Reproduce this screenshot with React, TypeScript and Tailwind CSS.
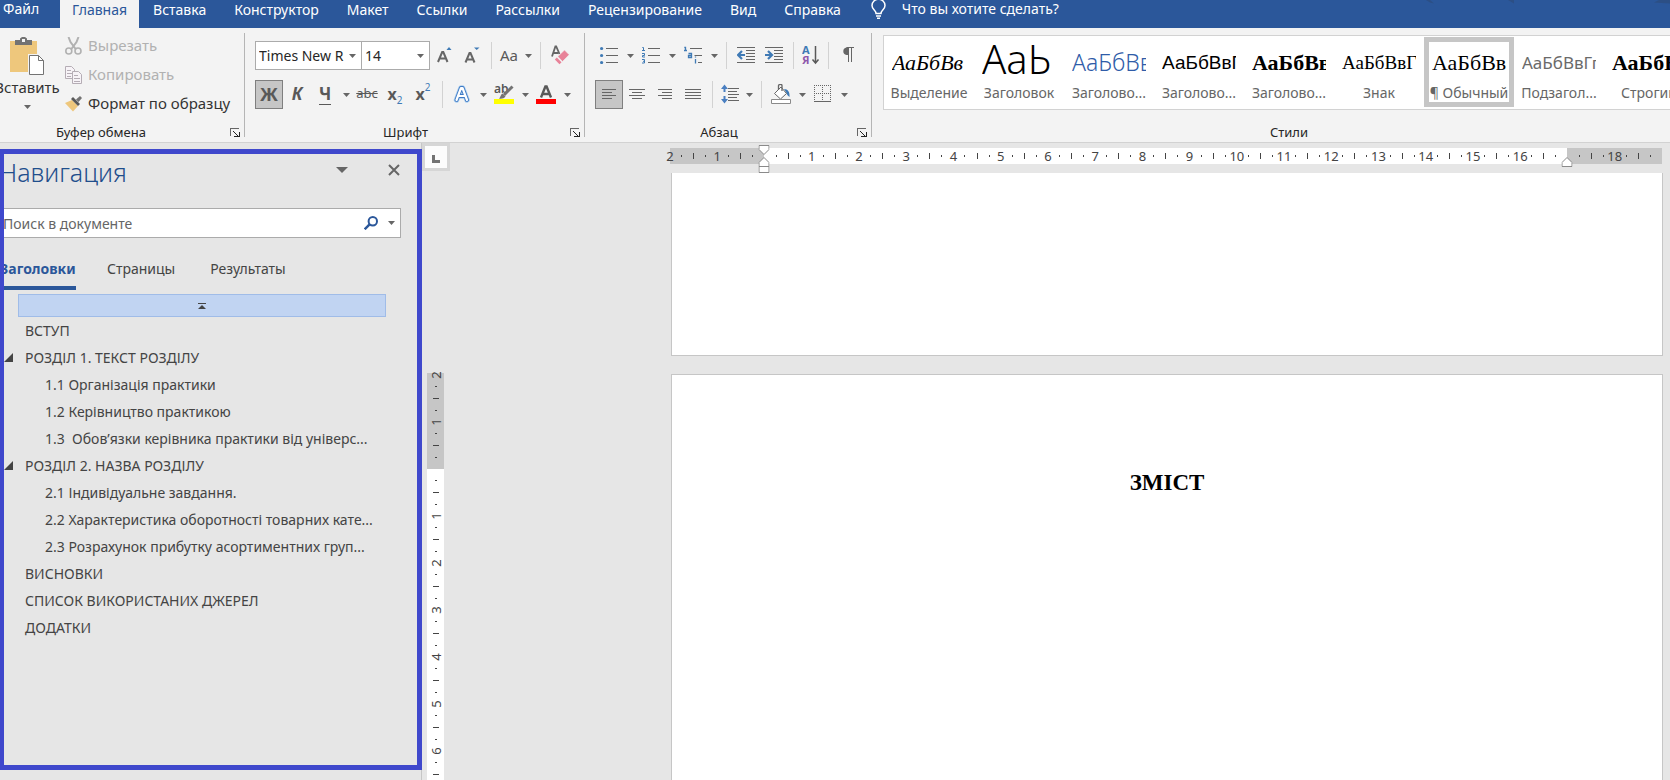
import type { ReactNode } from 'react';
import clsx from 'clsx';

const TABS = ['Вставка', 'Конструктор', 'Макет', 'Ссылки', 'Рассылки', 'Рецензирование', 'Вид', 'Справка'];

interface StylePreview {
  sample: string;
  label: string;
  cls: string;
  selected?: boolean;
}

const STYLES: StylePreview[] = [
  { sample: 'АаБбВв', label: 'Выделение', cls: 'font-["Liberation_Serif",serif] italic text-[22px] text-black' },
  { sample: 'АаЬ', label: 'Заголовок', cls: 'font-light text-[40px] text-black pb-2' },
  { sample: 'АаБбВв', label: 'Заголово...', cls: 'font-light text-[23px] text-[#2f5ca8]' },
  { sample: 'АаБбВвГ', label: 'Заголово...', cls: 'font-["Liberation_Sans",sans-serif] text-[19px] text-black' },
  { sample: 'АаБбВв', label: 'Заголово...', cls: 'font-["Liberation_Serif",serif] font-bold text-[22px] text-black' },
  { sample: 'АаБбВвГ', label: 'Знак', cls: 'font-["Liberation_Serif",serif] text-[19px] text-black' },
  { sample: 'АаБбВв', label: '¶ Обычный', cls: 'font-["Liberation_Serif",serif] text-[22px] text-black', selected: true },
  { sample: 'АаБбВвГг', label: 'Подзагол...', cls: 'text-[17px] text-[#6a6a6a]' },
  { sample: 'АаБбВв', label: 'Строгий', cls: 'font-["Liberation_Serif",serif] font-bold text-[22px] text-black' },
];

interface Heading {
  text: string;
  level: 1 | 2;
  open?: boolean;
}

const HEADINGS: Heading[] = [
  { text: 'ВСТУП', level: 1 },
  { text: 'РОЗДІЛ 1. ТЕКСТ РОЗДІЛУ', level: 1, open: true },
  { text: '1.1 Організація практики', level: 2 },
  { text: '1.2 Керівництво практикою', level: 2 },
  { text: '1.3  Обов’язки керівника практики від універс...', level: 2 },
  { text: 'РОЗДІЛ 2. НАЗВА РОЗДІЛУ', level: 1, open: true },
  { text: '2.1 Індивідуальне завдання.', level: 2 },
  { text: '2.2 Характеристика оборотності товарних кате...', level: 2 },
  { text: '2.3 Розрахунок прибутку асортиментних груп...', level: 2 },
  { text: 'ВИСНОВКИ', level: 1 },
  { text: 'СПИСОК ВИКОРИСТАНИХ ДЖЕРЕЛ', level: 1 },
  { text: 'ДОДАТКИ', level: 1 },
];

/* ---------- small parts ---------- */

function Caret() {
  return (
    <svg width="7" height="4" viewBox="0 0 7 4" fill="#666" className="shrink-0">
      <path d="M0 0h7L3.500 4z" />
    </svg>
  );
}

function Sep() {
  return <div className="mx-[5px] h-[27px] w-px shrink-0 bg-[#d2d2d2]" />;
}

interface ToolProps {
  label: string;
  children: ReactNode;
  menu?: boolean;
  narrow?: boolean;
  active?: boolean;
}

function Tool({ label, children, menu, narrow, active }: ToolProps) {
  return (
    <button type="button" aria-label={label} aria-pressed={active} className="flex h-[29px] shrink-0 items-center text-[#595959]">
      <span
        className={clsx(
          'flex h-full items-center justify-center pb-px',
          narrow ? 'w-6' : 'w-7',
          active && 'border border-[#7f7f7f] bg-[#c6c6c6]',
        )}
      >
        {children}
      </span>
      {menu && <span className="flex w-[14px] justify-center"><Caret /></span>}
    </button>
  );
}

function GroupFooter({ title }: { title: string }) {
  return (
    <div className="mt-auto flex h-[9px] items-center pr-1">
      <span className="flex-1 pr-1 text-center text-[13px] leading-none text-[#262626]">{title}</span>
      <button type="button" aria-label={`${title}: параметры`}>
        <svg width="10" height="9" viewBox="0 0 10 9" fill="none" stroke="#666" shapeRendering="crispEdges">
          <path d="M.5 8V.5H9" />
          <path d="M3 3l5 5" stroke="#222" />
          <path d="M9 4v5M4 8.500h5" stroke="#222" />
        </svg>
      </button>
    </div>
  );
}

function Lines({ rows }: { rows: [number, number][] }) {
  return (
    <svg width="18" height="14" viewBox="0 0 18 14" stroke="#666" shapeRendering="crispEdges">
      {rows.map(([from, to], i) => (
        <path key={i} d={`M${from} ${i * 3 + 2.5}H${to}`} />
      ))}
    </svg>
  );
}

/* ---------- ribbon groups ---------- */

function ClipboardGroup() {
  return (
    <section className="-ml-6 flex w-[269px] shrink-0 flex-col border-r border-[#b5b5b5] text-[15px]">
      <div className="flex pl-4">
        <button type="button" className="flex w-[70px] shrink-0 flex-col items-center pt-1 text-[#333]">
          <svg width="34" height="38" viewBox="0 0 34 38">
            <path d="M0 4h27v31H0z" fill="#eec77c" />
            <path d="M5 8V3h5V1.500L12 0h3l2 1.500V3h5v5z" fill="#737373" />
            <path d="M12 2h3v3h-3z" fill="#f3f3f3" />
            <path d="M18 17h17v21H18z" fill="#f3f3f3" />
            <path d="M19.500 18.500h9l5 5v14h-14z" fill="#fff" stroke="#737373" />
            <path d="M28.500 18.500v5h5" fill="none" stroke="#737373" />
          </svg>
          <span className="leading-6">Вставить</span>
          <span className="pt-[6px]"><Caret /></span>
        </button>
        <div className="flex flex-col gap-1 pl-[3px]">
          <button type="button" disabled className="flex h-[25px] items-center gap-[6px] text-[#b1b1b1]">
            <svg width="17" height="18" viewBox="0 0 17 18" fill="none" stroke="#b1b1b1" strokeWidth="1.600">
              <path d="M3.500 0l2 5 5.500 7.500M13.500 0l-2 5L6 12.500" strokeWidth="2" />
              <circle cx="3.800" cy="14" r="3" />
              <circle cx="13" cy="14" r="3" />
            </svg>
            Вырезать
          </button>
          <button type="button" disabled className="flex h-[25px] items-center gap-[6px] text-[#b1b1b1]">
            <svg width="17" height="18" viewBox="0 0 17 18" fill="#f7f3f7" stroke="#b5adb5">
              <path d="M.5.5h6l3 3v9h-9z" />
              <path d="M2 4.500h4M2 7.500h5M2 10.500h4" />
              <path d="M7.500 5.500h6l3 3v9h-9z" />
              <path d="M9 9.500h4M9 12.500h6M9 15.500h6" />
            </svg>
            Копировать
          </button>
          <button type="button" className="flex h-[25px] items-center gap-[6px] text-[#333]">
            <svg width="17" height="16" viewBox="0 0 17 16">
              <path d="M0 7l7-3 6 6-5 5.500z" fill="#eec77c" />
              <path d="M6 3l2-2 7 7-2 2z" fill="#595959" />
              <path d="M11 3.500L15 0l2 2-3.500 4z" fill="#737373" />
            </svg>
            Формат по образцу
          </button>
        </div>
      </div>
      <GroupFooter title="Буфер обмена" />
    </section>
  );
}

function FontGroup() {
  return (
    <section className="flex w-[340px] shrink-0 flex-col border-r border-[#b5b5b5]">
      <div className="flex flex-col gap-[10px] px-[10px] pt-2">
        <div className="flex items-center">
          <div className="flex h-[29px] w-[107px] items-center justify-between border border-[#ababab] bg-white pr-[5px] pl-[3px]">
            <input aria-label="Шрифт" defaultValue="Times New R" className="w-[90px] min-w-0 bg-transparent text-[14px] text-[#262626] outline-none" />
            <Caret />
          </div>
          <div className="-ml-px flex h-[29px] w-[71px] items-center justify-between border border-[#ababab] bg-white pr-[5px] pl-[3px]">
            <input aria-label="Размер шрифта" defaultValue="14" className="w-10 min-w-0 bg-transparent text-[14px] text-[#262626] outline-none" />
            <Caret />
          </div>
          <Tool label="Увеличить размер">
            <svg width="16" height="18" viewBox="0 0 16 18">
              <path d="M2 16L6.200 6h1.100l4.200 10M4 12.500h5.500" fill="none" stroke="#666" strokeWidth="2" />
              <path d="M10.500 4L13 1l2.500 3z" fill="#3f7ab5" />
            </svg>
          </Tool>
          <Tool label="Уменьшить размер">
            <svg width="16" height="18" viewBox="0 0 16 18">
              <path d="M1.500 16.500L5.500 7h1l4 9.500M3 13.500h6" fill="none" stroke="#666" strokeWidth="2" />
              <path d="M10 1.500h5.500L12.700 4z" fill="#3f7ab5" />
            </svg>
          </Tool>
          <Sep />
          <Tool label="Регистр" narrow menu><span className="text-[15px]">Aa</span></Tool>
          <Sep />
          <Tool label="Очистить форматирование">
            <svg width="20" height="20" viewBox="0 0 20 20">
              <path d="M2 11.500L5.400 1.500h.8L9.500 9M3.200 8h5" fill="none" stroke="#666" strokeWidth="1.800" />
              <path d="M7.800 11.500L14.500 5l4.700 4.700-6.700 6.800z" fill="#e88298" stroke="#f3f3f3" strokeWidth=".6" />
              <path d="M6.800 12.500l4.700 4.700-2 2-4.700-4.700z" fill="#e88298" />
            </svg>
          </Tool>
        </div>
        <div className="flex items-center">
          <Tool label="Полужирный" active><b className="text-[18px]">Ж</b></Tool>
          <Tool label="Курсив"><b className="text-[17px] italic">К</b></Tool>
          <Tool label="Подчеркнутый" menu><b className="border-b border-[#595959] text-[17px] leading-5">Ч</b></Tool>
          <Tool label="Зачеркнутый"><span className="text-[13px] line-through">abc</span></Tool>
          <Tool label="Подстрочный знак">
            <b className="text-[16px]">x</b><span className="self-end text-[10px] text-[#3f7ab5]">2</span>
          </Tool>
          <Tool label="Надстрочный знак">
            <b className="text-[16px]">x</b><span className="self-start text-[10px] text-[#3f7ab5]">2</span>
          </Tool>
          <Sep />
          <Tool label="Текстовые эффекты" menu>
            <svg width="18" height="20" viewBox="0 0 18 20" strokeLinejoin="round" strokeLinecap="round" fill="none">
              <path d="M3.500 16L8 4h1.500L14 16M5.500 12h6.500" stroke="#a9cdef" strokeWidth="5.500" />
              <path d="M3.500 16L8 4h1.500L14 16M5.500 12h6.500" stroke="#3f7ac4" strokeWidth="4" />
              <path d="M3.500 16L8 4h1.500L14 16M5.500 12h6.500" stroke="#fff" strokeWidth="2.200" />
            </svg>
          </Tool>
          <Tool label="Цвет выделения" menu>
            <svg width="20" height="20" viewBox="0 0 20 20">
              <text x="0" y="9" fontSize="12" fontWeight="600" fill="#555">ab</text>
              <path d="M18.500 2.500L10 11" stroke="#737373" strokeWidth="3" />
              <path d="M8.500 9.500l3 3c-1.500 2-4 2.500-6.500 2 1.500-1 1.500-4 3.500-5z" fill="#737373" />
              <path d="M0 15h20v5H0z" fill="#ff0" />
            </svg>
          </Tool>
          <Tool label="Цвет текста" menu>
            <svg width="20" height="20" viewBox="0 0 20 20">
              <path d="M5 13.500L9.400 2.500h1.200L15 13.500M6.800 10h6.400" fill="none" stroke="#595959" strokeWidth="2.400" />
              <path d="M0 15h20v5H0z" fill="#f00" />
            </svg>
          </Tool>
        </div>
      </div>
      <GroupFooter title="Шрифт" />
    </section>
  );
}

function ParagraphGroup() {
  return (
    <section className="flex w-[287px] shrink-0 flex-col border-r border-[#b5b5b5]">
      <div className="flex flex-col gap-[10px] px-[10px] pt-2">
        <div className="flex items-center">
          <Tool label="Маркеры" menu>
            <svg width="18" height="18" viewBox="0 0 18 18">
              <path d="M6 2.500h12M6 9.500h12M6 16.500h12" stroke="#666" />
              <circle cx="1.600" cy="2.500" r="1.600" fill="#3f7ab5" />
              <circle cx="1.600" cy="9.500" r="1.600" fill="#3f7ab5" />
              <circle cx="1.600" cy="16.500" r="1.600" fill="#3f7ab5" />
            </svg>
          </Tool>
          <Tool label="Нумерация" menu>
            <svg width="18" height="18" viewBox="0 0 18 18" stroke="#666">
              <path d="M6 2.500h12M6 9.500h12M6 16.500h12" />
              <path d="M.3 1.500h1.200V4.500M0 4.500h3M0 7.500h2.500v2H.5v1.500H3M0 13.500h2.500v3.500H0M1 15.300h1.500" fill="none" stroke="#3f7ab5" />
            </svg>
          </Tool>
          <Tool label="Многоуровневый список" menu>
            <svg width="18" height="18" viewBox="0 0 18 18" stroke="#666" fill="none">
              <path d="M6 2.500h12M10.500 9.500H18M14 16.500h4" />
              <path d="M.3 1.500h1.200V4.500M0 4.500h3M4.500 7.500h3v4h-3v-2h3M11.500 10.500v1M11.500 13v4.500" stroke="#3f7ab5" strokeWidth="1.300" />
            </svg>
          </Tool>
          <Sep />
          <Tool label="Уменьшить отступ">
            <svg width="18" height="16" viewBox="0 0 18 16" stroke="#666">
              <path d="M0 .5h18M9 3.500h9M9 6.500h9M9 9.500h9M9 12.500h9M0 15.500h18" />
              <path d="M8 8H1.500M5 4L1 8l4 4" stroke="#3f7ab5" strokeWidth="2.200" fill="none" />
            </svg>
          </Tool>
          <Tool label="Увеличить отступ">
            <svg width="18" height="16" viewBox="0 0 18 16" stroke="#666">
              <path d="M0 .5h18M9 3.500h9M9 6.500h9M9 9.500h9M9 12.500h9M0 15.500h18" />
              <path d="M0 8h6.500M3 4l4 4-4 4" stroke="#3f7ab5" strokeWidth="2.200" fill="none" />
            </svg>
          </Tool>
          <Sep />
          <Tool label="Сортировка" narrow>
            <svg width="18" height="20" viewBox="0 0 18 20" fontSize="11" fontWeight="700">
              <text x="0" y="9" fill="#3f7ab5">А</text>
              <text x="0" y="19" fill="#8e58ab">Я</text>
              <path d="M13.500 1v17M10.500 14.500l3 3.500 3-3.500" fill="none" stroke="#595959" strokeWidth="1.500" />
            </svg>
          </Tool>
          <Sep />
          <Tool label="Отобразить все знаки">
            <svg width="12" height="16" viewBox="0 0 12 16" stroke="#666">
              <path d="M12 .5H4.500" />
              <path d="M6.500 8H4.500a3.800 3.800 0 010-7.500H6.500z" fill="#666" stroke="none" />
              <path d="M6.500.5V15M9.500.5V15" />
            </svg>
          </Tool>
        </div>
        <div className="flex items-center">
          <Tool label="По левому краю" active><Lines rows={[[2, 16], [2, 12], [2, 16], [2, 12]]} /></Tool>
          <Tool label="По центру"><Lines rows={[[1, 17], [4, 14], [1, 17], [4, 14]]} /></Tool>
          <Tool label="По правому краю"><Lines rows={[[2, 16], [6, 16], [2, 16], [6, 16]]} /></Tool>
          <Tool label="По ширине"><Lines rows={[[1, 17], [1, 17], [1, 17], [1, 17]]} /></Tool>
          <Sep />
          <Tool label="Интервал" narrow menu>
            <svg width="18" height="20" viewBox="0 0 18 20" stroke="#666">
              <path d="M7 4.500h11M7 7.500h9M7 10.500h11M7 13.500h9M7 16.500h11" />
              <path d="M3.500 3v5M3.500 12v5" stroke="#4a7fc1" strokeWidth="2" />
              <path d="M0 5L3.500.5 7 5zM0 15l3.500 4.500L7 15z" fill="#4a7fc1" stroke="none" />
            </svg>
          </Tool>
          <Sep />
          <Tool label="Заливка" menu>
            <svg width="20" height="20" viewBox="0 0 20 20">
              <path d="M13 5c4 0 6 3 5.500 8-1-1-2.500-1.500-3-4z" fill="#3f7ab5" />
              <path d="M3.500 9.500L10 3l5.500 6.500-6 5.500z" fill="#fff" stroke="#666" />
              <path d="M7.500 6V1.500C8 0 11 0 11 1.500V7" fill="none" stroke="#666" strokeWidth="1.300" />
              <path d="M.5 15.500h19v4H.5z" fill="#fff" stroke="#8a8a8a" />
            </svg>
          </Tool>
          <Tool label="Границы" menu>
            <svg width="18" height="18" viewBox="0 0 18 18" stroke="#666" fill="none" shapeRendering="crispEdges">
              <path d="M0 .5h17M.5 0v16M16.500 0v16M0 8.500h17M8.500 0v16" strokeDasharray="1 1" />
              <path d="M0 16.500h17" />
            </svg>
          </Tool>
        </div>
      </div>
      <GroupFooter title="Абзац" />
    </section>
  );
}

function StylesGroup() {
  return (
    <section className="min-w-0 flex-1 overflow-x-clip">
      <div className="-mr-9 flex h-full flex-col">
        <div className="mt-[2px] ml-[11px] flex h-[75px] overflow-hidden border border-[#d2d2d2] bg-white py-px">
          {STYLES.map((s, i) => (
            <button
              key={i}
              type="button"
              className={clsx('flex h-[70px] w-[90px] shrink-0 flex-col items-center border-[5px]', s.selected ? 'border-[#c6c6c6]' : 'border-transparent')}
            >
              <span className={clsx('flex h-[41px] w-[74px] shrink-0 items-center overflow-hidden leading-none whitespace-nowrap', s.cls)}>
                {s.sample}
              </span>
              <span className="text-[14px] leading-5 whitespace-nowrap text-[#666]">{s.label}</span>
            </button>
          ))}
        </div>
        <div className="mt-auto flex h-[9px] items-center justify-center text-[13px] leading-none text-[#262626]">Стили</div>
      </div>
    </section>
  );
}

/* ---------- navigation pane ---------- */

function NavigationPane() {
  return (
    <aside className="flex w-[422px] shrink-0 flex-col border-r border-[#c6c6c6] pt-[6px] pb-[10px]">
      <div className="-mr-px flex-1 overflow-hidden border-[5px] border-l-4 border-[#3f48cc]">
        <div className="-ml-[5px] flex flex-col">
          <header className="flex h-[54px] items-start pt-[2px] pr-[17px]">
            <h1 className="flex-1 text-[25px] leading-8 font-light text-[#1f4e8c]">Навигация</h1>
            <button type="button" aria-label="Параметры области" className="mt-[11px] mr-10">
              <svg width="12" height="6" viewBox="0 0 12 6" fill="#666"><path d="M0 0h12L6 6z" /></svg>
            </button>
            <button type="button" aria-label="Закрыть" className="mt-2">
              <svg width="12" height="12" viewBox="0 0 12 12" stroke="#666" strokeWidth="2"><path d="M1 1l10 10M11 1L1 11" /></svg>
            </button>
          </header>
          <div className="mr-4 flex h-[30px] items-center border border-[#ababab] bg-white pr-[5px]">
            <input
              type="search"
              aria-label="Поиск в документе"
              placeholder="Поиск в документе"
              className="min-w-0 flex-1 bg-transparent pl-[3px] text-[14px] outline-none placeholder:text-[#666]"
            />
            <button type="button" aria-label="Найти">
              <svg width="14" height="14" viewBox="0 0 14 14" fill="none" stroke="#2b579a" strokeWidth="2">
                <circle cx="8.800" cy="5.200" r="4.200" />
                <path d="M5.800 8.200L.7 13.300" strokeWidth="2.400" />
              </svg>
            </button>
            <button type="button" aria-label="Параметры поиска" className="ml-[10px]"><Caret /></button>
          </div>
          <nav className="mt-[17px] flex text-[14px] text-[#444]">
            <button type="button" className="h-[35px] w-[77px] border-b-4 border-[#2b579a] pb-1 pl-px text-left font-bold text-[#2b579a]">Заголовки</button>
            <button type="button" className="h-[35px] border-b-4 border-transparent pb-1 pl-[31px]">Страницы</button>
            <button type="button" className="h-[35px] border-b-4 border-transparent pb-1 pl-[35px]">Результаты</button>
          </nav>
          <button type="button" aria-label="К началу документа" className="mt-1 mr-[31px] ml-[19px] flex h-[23px] items-center justify-center border border-[#a0bce8] bg-[#c1d4f2]">
            <svg width="8" height="6" viewBox="0 0 8 6" fill="#444"><path d="M0 0h8v1H0zM4 2l4 4H0z" /></svg>
          </button>
          <ul className="text-[14px] text-[#444]">
            {HEADINGS.map((h) => (
              <li key={h.text} className="flex h-[27px] items-center">
                <span className="w-[14px] shrink-0">
                  {h.open && <svg width="14" height="9" viewBox="0 0 14 9" fill="#444"><path d="M14 0v9H5z" /></svg>}
                </span>
                <a href="#" className={clsx('whitespace-pre', h.level === 1 ? 'pl-3' : 'pl-8')}>{h.text}</a>
              </li>
            ))}
          </ul>
        </div>
      </div>
    </aside>
  );
}

/* ---------- rulers and pages ---------- */

const H_CELLS = Array.from({ length: 21 }, (_, i) => i - 2);
const V_CELLS = Array.from({ length: 10 }, (_, i) => i - 2);

function HorizontalRuler() {
  return (
    <div className="relative flex h-4 text-[13px] leading-[17px] text-[#444]">
      <span className="absolute top-0 left-0 z-10 -translate-x-1/2">2</span>
      {H_CELLS.map((n) => {
        const mark = Math.abs(n + 1);
        return (
          <div key={n} className={clsx('relative flex flex-1 items-center justify-evenly', n < 0 || n > 16 ? 'bg-[#c6c6c6]' : 'bg-white')}>
            <i className="h-[2px] w-px bg-[#444]" />
            <i className="h-[6px] w-px bg-[#444]" />
            <i className="h-[2px] w-px bg-[#444]" />
            {mark > 0 && mark !== 17 && mark !== 19 && (
              <span className="absolute top-0 right-0 z-10 translate-x-1/2">{mark}</span>
            )}
            {n === -1 && (
              <svg className="absolute -top-[3px] right-0 z-10 translate-x-1/2" width="11" height="28" viewBox="0 0 11 28" fill="#fff" stroke="#8a8a8a">
                <path d="M.5.5h10v4l-5 5-5-5zM.5 21.500v-4l5-5 5 5v4zM.5 21.500h10v6H.5z" />
              </svg>
            )}
            {n === 16 && (
              <svg className="absolute top-[9px] right-0 z-10 translate-x-1/2" width="11" height="10" viewBox="0 0 11 10" fill="#fff" stroke="#8a8a8a">
                <path d="M.5 9.500v-4l5-5 5 5v4z" />
              </svg>
            )}
          </div>
        );
      })}
    </div>
  );
}

function VerticalRuler() {
  return (
    <div className="flex w-7 shrink-0 flex-col">
      <button type="button" aria-label="Табуляция" className="flex h-7 shrink-0 items-center justify-center border-[3px] border-[#d6d6d6] bg-[#fcfcfc]">
        <svg width="8" height="8" viewBox="0 0 8 8" fill="#737373" className="mt-1"><path d="M0 0h3v5h5v3H0z" /></svg>
      </button>
      <div className="mt-[202px] ml-[5px] w-[17px] bg-[#c6c6c6] pt-[2px] text-[13px] leading-4 text-[#444]">
        <div className="relative">
          <span className="absolute top-0 left-0 z-10 w-full -translate-y-1/2 -rotate-90 text-center">2</span>
          {V_CELLS.map((n) => (
            <div key={n} className={clsx('relative flex h-[47px] flex-col items-center justify-evenly', n < 0 ? 'bg-[#c6c6c6]' : 'bg-white')}>
              <i className="h-px w-[2px] bg-[#444]" />
              <i className="h-px w-[6px] bg-[#444]" />
              <i className="h-px w-[2px] bg-[#444]" />
              {n !== -1 && (
                <span className="absolute bottom-0 left-0 z-10 w-full translate-y-1/2 -rotate-90 text-center">{Math.abs(n + 1)}</span>
              )}
            </div>
          ))}
        </div>
      </div>
    </div>
  );
}

export default function App() {
  return (
    <div className="flex h-screen flex-col overflow-hidden bg-[#e6e6e6] font-['Noto_Sans','Open_Sans',sans-serif]">
      <div className="flex h-7 shrink-0 items-start bg-[#2b579a] text-[14px] leading-[18px] text-white">
        <button type="button" className="w-[60px] pl-[3px] text-left">Файл</button>
        <button type="button" className="h-7 bg-[#f3f3f3] px-3 pb-2 text-[#2b579a]">Главная</button>
        {TABS.map((t) => (
          <button key={t} type="button" className="h-7 px-[14px] pb-2">{t}</button>
        ))}
        <button type="button" className="flex items-start gap-4 pl-4">
          <svg width="15" height="19" viewBox="0 0 15 19" fill="none" stroke="#fff" strokeWidth="1.500">
            <path d="M5 13.500c0-3-4-4-4-8C1 2 4-.8 7.500-.8S14 2 14 5.500c0 4-4 5-4 8zM5 16h5M6 18.300h3" />
          </svg>
          Что вы хотите сделать?
        </button>
        <svg width="244" height="4" viewBox="0 0 244 4" fill="#2c4f85" className="ml-auto">
          <path d="M0 0h4l4 3.500-4-1zM82 0h6v3.500zM244 0v3.500l-16-1L233 0z" />
        </svg>
      </div>

      <div className="flex h-[115px] shrink-0 border-b border-[#d2d2d2] bg-[#f3f3f3] py-[5px]">
        <ClipboardGroup />
        <FontGroup />
        <ParagraphGroup />
        <StylesGroup />
      </div>

      <div className="flex min-h-0 flex-1">
        <NavigationPane />
        <VerticalRuler />
        <main className="flex min-w-0 flex-1 flex-col pt-[5px]">
          <div className="pr-2 pl-[220px]"><HorizontalRuler /></div>
          <div className="flex flex-1 flex-col pt-[9px] pr-[7px] pl-[221px]">
            <article className="h-[183px] border border-t-0 border-[#c6c6c6] bg-white" />
            <article className="mt-[18px] flex-1 border border-b-0 border-[#c6c6c6] bg-white pt-[94px] text-center">
              <h2 className="font-['Liberation_Serif',serif] text-[23px] leading-7 font-bold text-black">ЗМІСТ</h2>
            </article>
          </div>
        </main>
      </div>
    </div>
  );
}
